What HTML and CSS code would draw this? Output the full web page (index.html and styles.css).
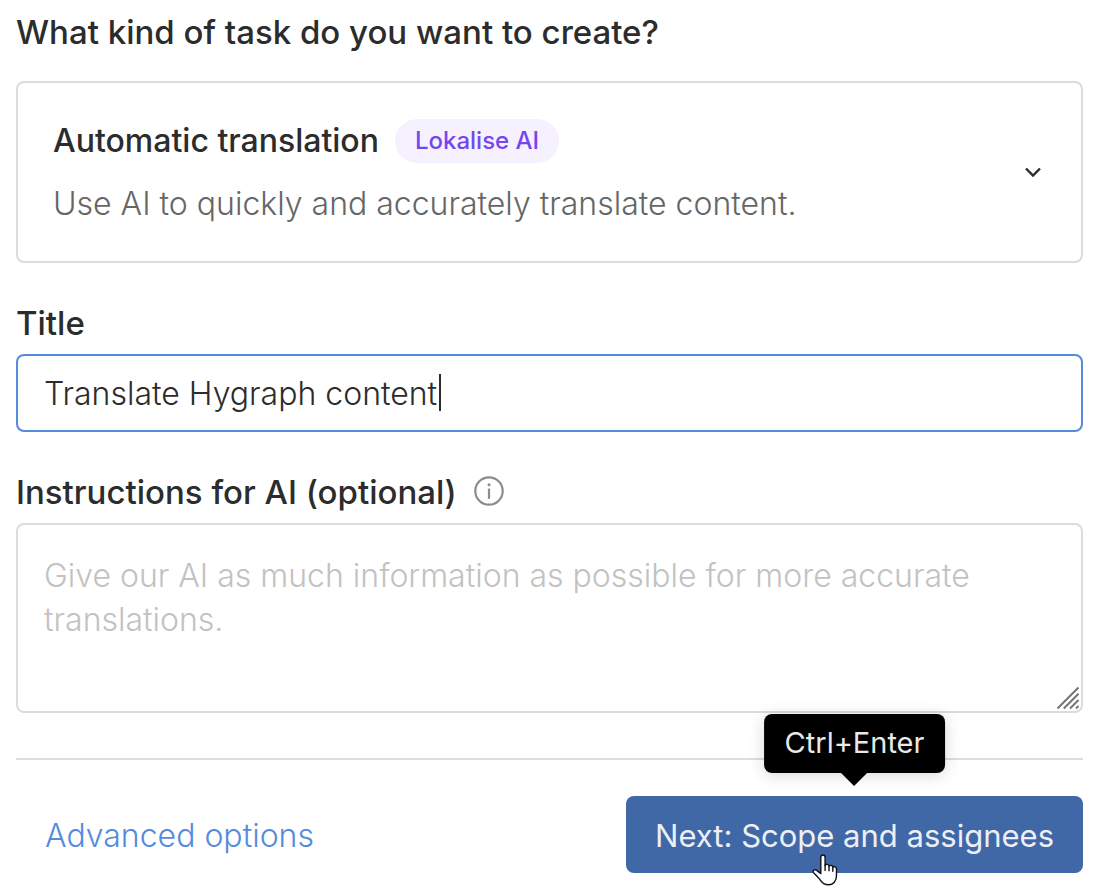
FILE: index.html
```html
<!DOCTYPE html>
<html lang="en">
<head>
<meta charset="utf-8">
<meta name="viewport" content="width=device-width, initial-scale=1">
<title>Create a task</title>
<link rel="stylesheet" href="styles.css">
</head>
<body>
<form class="task-form">
  <section class="group">
    <h1 class="heading" id="kind-label">What kind of task do you want to create?</h1>
    <button class="kind-card" type="button" aria-haspopup="listbox" aria-describedby="kind-label">
      <span class="kind-body">
        <span class="kind-title">Automatic translation <span class="tag">Lokalise AI</span></span>
        <span class="kind-text">Use AI to quickly and accurately translate content.</span>
      </span>
      <svg class="chevron" viewBox="0 0 20 20" aria-hidden="true"><path d="M3 5.500l7 7 7-7"/></svg>
    </button>
  </section>

  <div class="group field">
    <label class="label" for="title">Title</label>
    <div class="control">
      <input class="input" id="title" type="text" value="Translate Hygraph content">
      <span class="caret"></span>
    </div>
  </div>

  <div class="group field">
    <div class="label-row">
      <label class="label" for="instructions">Instructions for AI (optional)</label>
      <svg class="info" viewBox="0 0 30 30" aria-hidden="true"><circle cx="15" cy="15" r="13.700"/><path d="M15 12.600v10.200"/><circle class="info-dot" cx="15" cy="8.700" r="1.500"/></svg>
    </div>
    <div class="control">
      <textarea class="input textarea" id="instructions" placeholder="Give our AI as much information as possible for more accurate translations."></textarea>
      <svg class="grip" viewBox="0 0 24 24" aria-hidden="true"><path d="M1.500 22.500L22.500 1.500M7.800 22.500L22.500 7.800M14 22.500l8.500-8.500M20 22.500l2.500-2.500"/></svg>
    </div>
  </div>

  <footer class="footer">
    <a class="link" href="#advanced">Advanced options</a>
    <div class="next">
      <button class="primary" type="submit">Next: Scope and assignees</button>
      <span class="tooltip" role="tooltip">Ctrl+Enter</span>
      <svg class="pointer" viewBox="0 0 26 32" aria-hidden="true"><path d="M8.800 3.200c0-3 4.300-3 4.300 0v8.200c.6-1.600 3.600-1.300 3.900.7.900-1.300 3.500-.8 3.800 1 1-1.100 3.700-.4 3.700 1.900v6.500c0 5.500-3.200 9.300-7.800 9.300-4.200 0-6.700-1.700-8.700-5.200L4.300 21.500 1.800 18.900c-1.700-1.900.2-3.900 2.600-2.800l4.400 3.500z"/><path d="M13.100 11v5.500M17 12v4.800M20.800 13v4.300"/></svg>
    </div>
  </footer>
</form>
</body>
</html>
```
FILE: styles.css
```css
* {
  box-sizing: border-box;
}

body {
  margin: 0;
  background: #fff;
  color: #2c2c2c;
  font-family: Inter, "Liberation Sans", sans-serif;
  font-size: 32px;
  line-height: 44px;
}

button,
input,
textarea {
  font: inherit;
  color: inherit;
}

.task-form {
  padding: 10px 11px 18px 16px;
}

.group {
  margin-bottom: 38px;
}

.heading,
.label {
  margin: 0;
  font-size: 33px;
  font-weight: 500;
  line-height: 44px;
}

.heading {
  margin-bottom: 27px;
}

.kind-card {
  display: flex;
  align-items: center;
  justify-content: space-between;
  width: 100%;
  padding: 36px 38px 35px 35px;
  border: 2px solid #dcdcdc;
  border-radius: 8px;
  background: #fff;
  text-align: left;
}

.kind-body {
  display: grid;
  gap: 19px;
}

.kind-title {
  display: flex;
  align-items: center;
  gap: 16px;
  font-weight: 500;
}

.tag {
  padding: 0 20px;
  border-radius: 24px;
  background: #f5f1ff;
  color: #7546ee;
  font-size: 24px;
}

.kind-text {
  color: #666;
  font-weight: 300;
}

.chevron {
  width: 20px;
  height: 20px;
  fill: none;
  stroke: #2c2c2c;
  stroke-width: 2.400;
}

.field {
  display: grid;
  gap: 9px;
}

.label-row {
  display: flex;
  align-items: center;
  gap: 17px;
}

.info {
  width: 30px;
  height: 30px;
  margin-bottom: 3px;
  fill: none;
  stroke: #8c8c8c;
  stroke-width: 2.200;
}

.info-dot {
  fill: #8c8c8c;
  stroke: none;
}

.control {
  position: relative;
  display: grid;
}

.input {
  width: 100%;
  padding: 16px 26px 14px;
  border: 2px solid #558bdd;
  border-radius: 8px;
  outline: 0;
  background: #fff;
  font-weight: 300;
  line-height: 44px;
  caret-color: transparent;
}

.textarea {
  height: 190px;
  padding: 29px 26px;
  border-color: #dcdcdc;
  resize: none;
}

.textarea::placeholder {
  color: #c2c2c2;
  opacity: 1;
}

.caret {
  position: absolute;
  top: 20px;
  left: 423px;
  width: 2px;
  height: 37px;
  background: #2c2c2c;
}

.grip {
  position: absolute;
  right: 3px;
  bottom: 3px;
  width: 24px;
  height: 24px;
  fill: none;
  stroke: #757575;
  stroke-width: 2;
}

.footer {
  display: flex;
  align-items: center;
  justify-content: space-between;
  margin-top: 45px;
  padding: 36px 0 0 29px;
  border-top: 2px solid #dcdcdc;
}

.link {
  padding-top: 2px;
  color: #558bdd;
  font-weight: 300;
  text-decoration: none;
}

.next {
  position: relative;
}

.primary {
  display: block;
  padding: 18px 29px 15px;
  border: 0;
  border-radius: 8px;
  background: #4067a6;
  color: #eceff5;
  font-size: 31px;
}

.tooltip {
  position: absolute;
  bottom: calc(100% + 23px);
  left: 50%;
  padding: 7px 21px 8px;
  border-radius: 8px;
  background: #000;
  box-shadow: 0 2px 16px rgba(0, 0, 0, .16);
  color: #e8e8e8;
  font-size: 29px;
  transform: translateX(-50%);
}

.tooltip::after {
  content: "";
  position: absolute;
  top: 100%;
  left: 50%;
  margin-left: -13px;
  border: 13px solid transparent;
  border-top-color: #000;
  border-bottom: 0;
}

.pointer {
  position: absolute;
  top: 58px;
  left: 186px;
  width: 26px;
  height: 32px;
  fill: #fff;
  stroke: #101018;
  stroke-width: 1.400;
  stroke-linejoin: round;
  stroke-linecap: round;
}
```
